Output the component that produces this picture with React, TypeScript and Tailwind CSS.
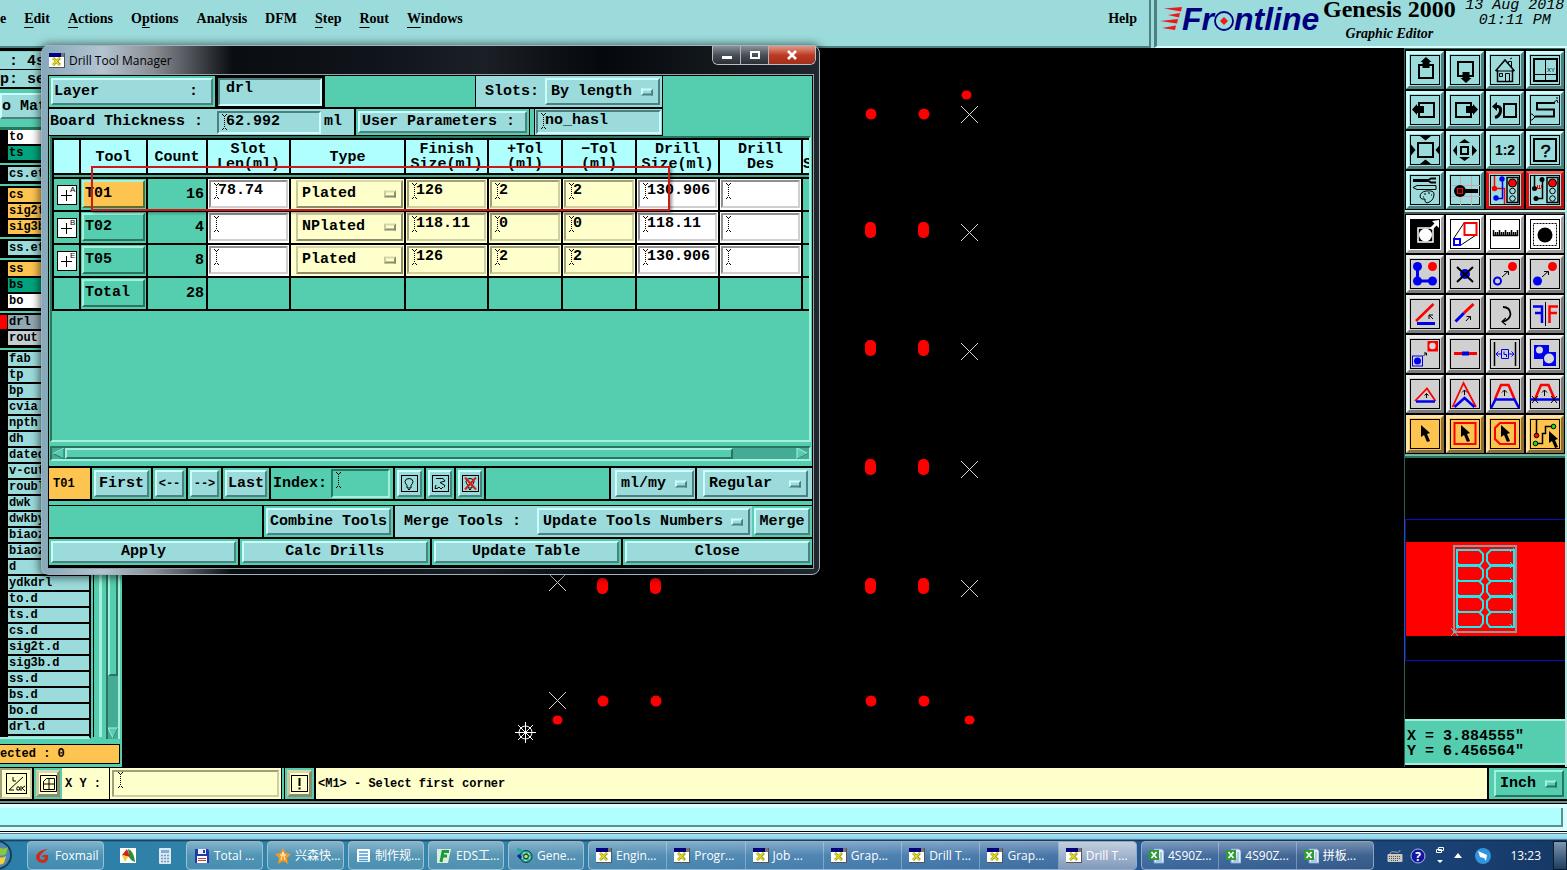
import React from "react";
import clsx from "clsx";

const AQUA = "bg-[#9cdbdb] border-t-[#cdfcfc] border-l-[#cdfcfc] border-b-[#4d8181] border-r-[#4d8181]";
const AQUA_IN = "bg-[#9cdbdb] border-t-[#4d8181] border-l-[#4d8181] border-b-[#cdfcfc] border-r-[#cdfcfc]";
const GREEN = "bg-[#54ceae] border-t-[#a4f0dc] border-l-[#a4f0dc] border-b-[#2a7560] border-r-[#2a7560]";
const GREEN_IN = "bg-[#54ceae] border-t-[#2a7560] border-l-[#2a7560] border-b-[#a4f0dc] border-r-[#a4f0dc]";
const WHITE_IN = "bg-white border-t-[#909090] border-l-[#909090] border-b-[#cfcfcf] border-r-[#cfcfcf]";
const CREAM = "bg-[#ffffcc] border-t-[#d8d8ac] border-l-[#c9c9a0] border-b-[#8c8c6c] border-r-[#8c8c6c]";
const CREAM_IN = "bg-[#ffffcc] border-t-[#a0a07c] border-l-[#a0a07c] border-b-[#cfcfa4] border-r-[#cfcfa4]";
const ORANGE = "bg-[#fdc450] border-t-[#a4f0dc] border-l-[#a4f0dc] border-b-[#5d6b30] border-r-[#5d6b30]";

function Btn({ tone = AQUA, className, children, label }: { tone?: string; className?: string; children?: React.ReactNode; label?: string }) {
  return (
    <button type="button" aria-label={label} className={clsx("flex items-center justify-center overflow-hidden whitespace-pre border-2", tone, className)}>
      {children}
    </button>
  );
}

function Caret() {
  return (
    <svg width="5" height="16" viewBox="0 0 5 16" className="shrink-0" aria-hidden="true">
      <path d="M0 .5h1M4 .5h1M1 1.5h3M0 15.5h1M4 15.5h1M1 14.5h3" stroke="#000" strokeDasharray="1 1" />
      <path d="M2.500 2v12" stroke="#000" strokeDasharray="1 1" />
    </svg>
  );
}

function Field({ label, value = "", tone = WHITE_IN, className, caret = true }: { label: string; value?: string; tone?: string; className?: string; caret?: boolean }) {
  return (
    <label className={clsx("flex items-start overflow-hidden border-2 pl-[3px] pt-px", tone, className)}>
      {caret ? <Caret /> : <span className="w-1 shrink-0" />}
      <input aria-label={label} defaultValue={value} className="-ml-px h-4 w-full min-w-0 bg-transparent leading-4 outline-none" />
    </label>
  );
}

function Drop({ label, options, tone = AQUA, pill = AQUA, className }: { label: string; options: string[]; tone?: string; pill?: string; className?: string }) {
  return (
    <div className={clsx("relative border-2", tone, className)}>
      <select aria-label={label} className="h-full w-full appearance-none bg-transparent pl-1 pt-px outline-none">
        {options.map((o) => (
          <option key={o}>{o}</option>
        ))}
      </select>
      <span className={clsx("pointer-events-none absolute right-[5px] top-1/2 h-[7px] w-3 -translate-y-1/2 border-2", pill)} />
    </div>
  );
}

/* ---------- tool palette ---------- */

const Cursor = ({ x = 15, y = 10 }: { x?: number; y?: number }) => (
  <path transform={`translate(${x} ${y})`} d="M0 0L0 12L3 10L6 17L9 16L6 9L9 8Z" fill="#000" stroke="none" />
);

const Arrow = ({ d, head }: { d: string; head: string }) => (
  <g stroke="#000" fill="none" strokeWidth="1">
    <path d={d} />
    <path d={head} />
  </g>
);

const K = { fill: "none", stroke: "#000", strokeWidth: 2 };
const R = "#ff0000";
const B = "#0000f0";

const viewIcons: { name: string; hot?: boolean; art: React.ReactNode }[] = [
  { name: "Pan up", art: <g><rect x="13" y="14" width="14" height="13" {...K} /><path d="M20 6L25.500 11H23.500V17H16.500V11H14.500Z" /></g> },
  { name: "Pan down", art: <g><rect x="12" y="11" width="15" height="14" {...K} /><path d="M20 32L25.500 27H23.500V21H16.500V27H14.500Z" /></g> },
  { name: "Home view", art: <g fill="none" stroke="#000"><path d="M9.500 20L19 9L28.500 20" strokeWidth="1.500" /><path d="M11.500 19V30.500H26.500V19" strokeWidth="1.500" /><path d="M10 20H28M13.500 22.500h3v3h-3zM19.500 30V22.500H23.500V30M22.500 13V10.500H25.500V16M24 8l2-1" /></g> },
  { name: "XY view", art: <g><rect x="8" y="8" width="23" height="22" {...K} /><path d="M19.500 8V30M8 23.500H31" stroke="#000" /><text x="21" y="21" fontSize="6" fontWeight="400" fontFamily="Liberation Sans">XY</text></g> },
  { name: "Pan left", art: <g><rect x="13" y="12" width="15" height="14" {...K} /><path d="M6 18.500L11 13V15H18V22H11V24Z" /></g> },
  { name: "Pan right", art: <g><rect x="10" y="12" width="15" height="14" {...K} /><path d="M32 18.500L27 13V15H20V22H27V24Z" /></g> },
  { name: "Previous view", art: <g><rect x="18" y="13" width="12" height="13" {...K} /><path d="M9 15.500H12Q15 16 14.500 20Q14 25 9 26.500" {...K} strokeWidth={3} /><path d="M6 15.500L11 11V20Z" /></g> },
  { name: "Serpentine", art: <g><path d="M29 12H11V18.500H28V25.500H9" {...K} /><path d="M27 12L31 9M31 8V6M31 9L32 12M9 26L6 23M9 26L6 29M5 22V24M5 28V30" stroke="#000" fill="none" /></g> },
  { name: "Zoom in", art: <g><rect x="12" y="12" width="15" height="14" {...K} /><path d="M14 5H25L19.500 9.500ZM14 33H25L19.500 28.500ZM5 13.500V24.500L9.500 19ZM34 13.500V24.500L29.500 19Z" /></g> },
  { name: "Zoom out", art: <g><rect x="15" y="16" width="7" height="7" {...K} /><path d="M13 12H24L18.500 8ZM13 26H24L18.500 30ZM11 14V25L7 19.500ZM26 14V25L31 19.500Z" /></g> },
  { name: "Scale 1:2", art: <text x="19" y="24" fontSize="14" fontWeight="700" textAnchor="middle" fontFamily="Liberation Sans">1:2</text> },
  { name: "Query", art: <g><rect x="8" y="8" width="22" height="22" {...K} /><text x="20" y="26" fontSize="18" textAnchor="middle" fontWeight="400" stroke="#000" strokeWidth=".5" fontFamily="Liberation Mono">?</text></g> },
  { name: "Colors and tools", art: <g fill="none" stroke="#000"><path d="M7 9.500H22" strokeWidth="3" /><path d="M30 7.500H25L22 9.500L25 11.500H30" strokeWidth="2" /><path d="M7 16.500L11 14.500H30V18.500H11Z" /><path d="M14 26Q14 21 20 20Q28 19 28 23Q28 30 21 32Q18 31 19 28Q15 29 14 26Z" /><path d="M18 23h2M22 22h2M25 24h1M17 26h1" /></g> },
  { name: "Zoom lens", art: <g><path d="M14.500 5V34M25.500 5V34M5 14.500H34M5 25.500H34" stroke="#c9a6b4" /><circle cx="14" cy="20" r="6" /><path d="M19 20H32" stroke="#000" strokeWidth="4" /><rect x="11.500" y="17.500" width="5" height="5" fill="none" stroke={R} /><path d="M13.500 19.500h1v1h-1z" fill={R} /></g> },
  { name: "Net check on", hot: true, art: <g><g fill="none"><path d="M8.500 5V17.500H18.500V33" stroke={R} strokeWidth="1.500" /><path d="M16.500 8V27.500H10" stroke={B} strokeWidth="1.500" /><rect x="21" y="6.500" width="11" height="25" stroke="#000" strokeWidth="1.500" /></g><circle cx="16" cy="8" r="2.700" fill={B} /><circle cx="10" cy="27" r="2.700" fill={B} /><circle cx="8.500" cy="17.500" r="2.700" fill={R} /><circle cx="26.500" cy="12" r="4" fill={R} stroke="#000" /><circle cx="26.500" cy="20" r="2.800" fill="none" stroke="#000" /><circle cx="26.500" cy="27.500" r="2.800" fill="none" stroke="#000" /></g> },
  { name: "Net check off", hot: true, art: <g><g fill="none"><path d="M8.500 5V17.500M16.500 8V27.500H10" stroke="#000" strokeWidth="1.500" /><path d="M10 17.500H15M11.500 14V17M13.500 14V17M15.500 14V17" stroke={R} /><rect x="21" y="6.500" width="11" height="25" stroke="#000" strokeWidth="1.500" /></g><circle cx="16" cy="8.500" r="2.500" /><circle cx="10" cy="27.500" r="2.500" /><circle cx="8.500" cy="17.500" r="2.500" /><circle cx="26.500" cy="12" r="4" fill={R} stroke="#000" /><circle cx="26.500" cy="20" r="2.800" fill="none" stroke="#000" /><circle cx="26.500" cy="27.500" r="2.800" fill="none" stroke="#000" /></g> },
];

const editIcons: { name: string; art: React.ReactNode }[] = [
  { name: "Add feature", art: <g><rect x="5" y="5" width="28" height="28" /><rect x="12" y="13" width="15" height="14" fill="none" stroke="#fff" strokeWidth="1.500" /><circle cx="19.500" cy="20" r="6.500" fill="#fff" /><path d="M25 14L30 9" stroke="#fff" strokeWidth="3" /><path d="M33 5V13L26 6Z" fill="#fff" /></g> },
  { name: "Resize feature", art: <g fill="none"><path d="M8 23L18 8M15 30L30 20" stroke="#000" /><rect x="18.500" y="8" width="12" height="12" stroke={R} strokeWidth="2" /><rect x="8" y="24" width="6" height="6" stroke={B} strokeWidth="2" /></g> },
  { name: "Measure", art: <path d="M7 20.500H32M7.500 15v6M9.500 17v4M11.500 17v4M13.500 15v6M15.500 17v4M17.500 17v4M19.500 15v6M21.500 17v4M23.500 17v4M25.500 15v6M27.500 17v4M29.500 17v4M31.500 15v6" stroke="#000" strokeWidth="1.500" /> },
  { name: "Select feature", art: <g><rect x="7.500" y="8.500" width="23" height="22" fill="none" stroke="#000" strokeDasharray="2 1" /><circle cx="19" cy="20" r="7.500" /></g> },
  { name: "Copy node", art: <g><path d="M11.500 11V26H26" fill="none" stroke={B} strokeWidth="3" /><circle cx="11.500" cy="11.500" r="4.500" fill={B} /><circle cx="11.500" cy="26" r="4.500" fill={B} /><circle cx="26.500" cy="26" r="4.500" fill={B} /><circle cx="26.500" cy="11.500" r="4.500" fill={R} /></g> },
  { name: "Delete", art: <g><circle cx="19" cy="19" r="5" fill={B} /><path d="M11 12L27 27M27 12L11 27" stroke="#000" strokeWidth="2" /></g> },
  { name: "Move ring", art: <g><circle cx="26.500" cy="11.500" r="4.500" fill={R} /><circle cx="11.500" cy="26" r="3.500" fill="none" stroke={B} strokeWidth="2" /><Arrow d="M16 22L22 16.500" head="M18 16.500H22.500V20" /></g> },
  { name: "Move pad", art: <g><circle cx="26.500" cy="11.500" r="4.500" fill={R} /><circle cx="11.500" cy="26" r="4.500" fill={B} /><Arrow d="M16 22L22 16.500" head="M18 16.500H22.500V20" /></g> },
  { name: "Rotate line", art: <g><path d="M10 26L27.500 9" stroke={R} strokeWidth="2.500" /><path d="M11 28.500H29" stroke={B} strokeWidth="3" /><Arrow d="M27 24L23 20" head="M23 24V20H27" /></g> },
  { name: "Extend line", art: <g><path d="M18 18L27.500 9" stroke={R} strokeWidth="3" /><path d="M9.500 26.500L18 18" stroke={B} strokeWidth="3" /><Arrow d="M20 26L24 21.500" head="M20.500 21.500H24.500V25" /></g> },
  { name: "Rotate", art: <g fill="none" stroke="#000" strokeWidth="1.800"><path d="M17 12Q24 12 24.500 19Q24 25 17 26.500" /><path d="M20 23L16 26.500L20 30" strokeWidth="1.200" /></g> },
  { name: "Mirror", art: <g fill="none"><path d="M16 28V11.500H7M16 18H9" stroke={B} strokeWidth="2.500" /><path d="M19.500 7V31" stroke="#000" /><path d="M23.500 28V11.500H32M23.500 18H31" stroke={R} strokeWidth="2.500" /></g> },
  { name: "Replace symbol", art: <g><rect x="6.500" y="21" width="10" height="10" fill="none" stroke={B} /><circle cx="11.500" cy="26" r="3.500" fill={B} /><rect x="21.500" y="6" width="10.500" height="10.500" fill={R} /><circle cx="26.500" cy="11" r="3.200" fill="#d8d8d8" /><Arrow d="M17.500 21L20.500 18" head="M18 18H20.500V20.500" /></g> },
  { name: "Break line", art: <g><path d="M8 18.500H31" stroke={R} strokeWidth="3" /><path d="M16 18.500H23" stroke={B} strokeWidth="4" /></g> },
  { name: "Spacing", art: <g fill="none"><path d="M8.500 7V31M29.500 7V31" stroke="#000" strokeWidth="1.500" /><path d="M10 19H16M22 19H28M12.500 16.500L10 19L12.500 21.500M25.500 16.500L28 19L25.500 21.500M15.500 14.500H22.500V23.500H15.500ZM18 16.500V19.500H20.500V22" stroke={B} /></g> },
  { name: "Merge shapes", art: <g><path d="M8 10H23V17H30V31H17V24H8Z" fill={B} /><circle cx="13.500" cy="15" r="3.500" fill="#d8d8d8" /><circle cx="23" cy="23.500" r="5" fill="#d8d8d8" /></g> },
  { name: "Small wedge", art: <g fill="none"><path d="M9 26L21 13.500L29.500 26" stroke={R} strokeWidth="1.800" /><path d="M10 26.500H29" stroke={B} strokeWidth="2.500" /><Arrow d="M20.500 23V19" head="M18.500 20.500L20.500 18.500L22.500 20.500" /></g> },
  { name: "Tall wedge", art: <g fill="none"><path d="M6.500 32L17.500 8L30 32" stroke={R} strokeWidth="1.800" /><path d="M8.500 32L18.500 23L28.500 32" stroke={B} strokeWidth="2.500" /><Arrow d="M18.500 20V15" head="M16 17.500L18.500 15L21 17.500" /></g> },
  { name: "Trapezoid", art: <g fill="none"><path d="M9 24L15 10H22.500L28.500 24" stroke={R} strokeWidth="2.500" /><path d="M5 33L9.500 24.500H28.500L33 33" stroke={B} strokeWidth="2.500" /><Arrow d="M18.500 21V15" head="M16 17.500L18.500 15L21 17.500" /></g> },
  { name: "Trapezoid cut", art: <g fill="none"><path d="M9 24L15 10H22.500L28.500 24" stroke={R} strokeWidth="2.500" /><path d="M4 24.500H33" stroke={B} strokeWidth="2.500" /><path d="M6 21L12 28M12 21L6 28M25 21L31 28M31 21L25 28" stroke="#000" /><Arrow d="M18.500 21V15" head="M16 17.500L18.500 15L21 17.500" /></g> },
  { name: "Select", art: <Cursor /> },
  { name: "Select by frame", art: <g><rect x="8.500" y="8" width="21" height="21" fill="none" stroke={R} strokeWidth="2" /><Cursor x={15} y={10} /></g> },
  { name: "Select by polygon", art: <g><path d="M14 8H29V29H14L9 24V13Z" fill="none" stroke={R} strokeWidth="2" /><Cursor x={15} y={10} /></g> },
  { name: "Select net", art: <g><path d="M10.500 5V20M10 28.500H16.500V18.500H19.500V11.500H27" fill="none" stroke="#000" strokeWidth="1.500" /><circle cx="10.500" cy="20.500" r="2.300" fill={R} stroke="#000" /><circle cx="9.500" cy="28.500" r="2.300" fill="#10e010" stroke="#000" /><circle cx="27.500" cy="11.500" r="2.300" fill="#10e010" stroke="#000" /><Cursor x={23} y={16} /></g> },
];

function ToolButton({ name, art, tone, hot }: { name: string; art: React.ReactNode; tone: string; hot?: boolean }) {
  return (
    <button type="button" aria-label={name} className={clsx("size-[38px] border-[3px]", tone)}>
      <svg width="32" height="32" viewBox="3 3 32 32" aria-hidden="true">
        {hot && <rect x="3.500" y="3.500" width="31" height="31" fill="none" stroke="#9cdbdb" />}
        <rect x="4.500" y="4.500" width="29" height="29" fill="none" stroke="#000" />
        {art}
      </svg>
    </button>
  );
}

const GRAY = "bg-[#d0d0d0] border-t-[#efefef] border-l-[#efefef] border-b-[#7d7d7d] border-r-[#7d7d7d]";
const WHITE = "bg-white border-t-[#ffffff] border-l-[#ffffff] border-b-[#a0a0a0] border-r-[#a0a0a0]";
const GOLD = "bg-[#fdc450] border-t-[#ffe3a6] border-l-[#ffe3a6] border-b-[#8a7038] border-r-[#8a7038]";
const HOT = "bg-[#9cdbdb] border-t-[#f0645c] border-l-[#e01010] border-b-[#a01818] border-r-[#c01010]";

/* ---------- layer list ---------- */

type Layer = { n: string; c?: string; gap?: boolean; mark?: boolean };
const layers: Layer[] = [
  { n: "to", c: "bg-white" },
  { n: "ts", c: "bg-[#00a37c]" },
  { n: "cs.et", gap: true },
  { n: "cs", c: "bg-[#fdc450]", gap: true },
  { n: "sig2t", c: "bg-[#fdc450]" },
  { n: "sig3b", c: "bg-[#fdc450]" },
  { n: "ss.et", gap: true },
  { n: "ss", c: "bg-[#fdc450]", gap: true },
  { n: "bs", c: "bg-[#00a37c]" },
  { n: "bo", c: "bg-white" },
  { n: "drl", c: "bg-[#8fa9b2]", gap: true, mark: true },
  { n: "rout", c: "bg-[#c5cfd3]" },
  { n: "fab", gap: true },
  ...["tp", "bp", "cvia", "npth", "dh", "dated", "v-cut", "roubl", "dwk", "dwkby", "biaoz", "biaoz", "d", "ydkdrl", "to.d", "ts.d", "cs.d", "sig2t.d", "sig3b.d", "ss.d", "bs.d", "bo.d", "drl.d", ""].map((n) => ({ n })),
];

function LayerPanel() {
  return (
    <aside className="flex w-[122px] shrink-0 flex-col bg-[#54ceae] text-xs leading-[15px]">
      <div className="flex h-[41px] flex-col gap-px border-b border-black bg-black pt-[3px] text-[15px]">
        <div className="flex h-[18px] items-center whitespace-pre border-t border-[#7fd0c0] bg-[#9cdbdb] pl-[9px] pt-px">: 4s</div>
        <div className="flex h-[17px] items-center whitespace-pre bg-[#9cdbdb] pt-px">p: se</div>
      </div>
      <Btn className="mt-1 h-[26px] !justify-start text-[15px]">o Mat</Btn>
      <div className="mt-2 h-[3px] shrink-0 bg-[#2a7560]" />
      <div className="flex min-h-0 flex-1 overflow-hidden">
        <ul className="w-[91px] shrink-0 overflow-hidden border-r-2 border-b-2 border-r-black border-b-[#a4f0dc] bg-black">
          {layers.map((l, i) => (
            <li key={i}>
              {l.gap && <div className="h-[5px] border-b-2 border-t border-black bg-[#54ceae]" />}
              <button type="button" className="flex h-4 w-full text-left">
                <span className={clsx("h-[14px] w-2 shrink-0", l.mark && "border-r border-black bg-[#ff0000]")} />
                <span className={clsx("h-[14px] flex-1 pl-px", l.c ?? "bg-[#9cdbdb]")}>{l.n}</span>
              </button>
            </li>
          ))}
        </ul>
        <div className="mb-[2px] ml-[2px] w-[9px] border-l border-r-[3px] border-l-black border-r-[#a4f0dc]" />
        <div className="ml-1 flex w-[14px] flex-col border-x-2 border-l-[#2a7560] border-r-[#a4f0dc] bg-[#45ab94]">
          <div className={clsx("h-[546px] border-2", GREEN)} />
          <span className="flex-1" />
          <svg width="10" height="12" viewBox="0 0 10 12" aria-hidden="true"><path d="M0 1H10L5 11Z" fill="#54ceae" stroke="#a4f0dc" /><path d="M10 1L5 11" stroke="#2a7560" /></svg>
        </div>
      </div>
      <div className="mb-[3px] mr-[2px] mt-[5px] flex h-[20px] items-center whitespace-pre border border-l-0 border-black bg-[#fdc450]">ected : 0</div>
    </aside>
  );
}

/* ---------- board canvas ---------- */

const crosses = [[969, 114], [969, 232], [969, 351], [969, 469], [969, 588], [557, 582], [557, 700]];
const slots = [[871, 230], [924, 230], [871, 348], [924, 348], [871, 467], [924, 467], [871, 586], [924, 586], [603, 586], [656, 586]];
const holes = [[871, 114], [924, 114], [871, 701], [924, 701], [603, 701], [656, 701]];
const pins = [[966, 95], [557, 720], [969, 720]];

function Board() {
  return (
    <svg width="100%" height="100%" className="block" role="img" aria-label="Drill layer">
      <g transform="translate(-122 -48)">
        {crosses.map(([x, y], i) => (
          <path key={i} d={`M${x - 8} ${y - 8}L${x + 9} ${y + 9}M${x - 8} ${y + 9}L${x + 9} ${y - 8}`} stroke="#d8d8d8" />
        ))}
        {slots.map(([x, y], i) => <rect key={i} x={x - 6} y={y - 8} width="11" height="16" rx="5" fill="#ff0000" />)}
        {holes.map(([x, y], i) => <circle key={i} cx={x} cy={y} r="5.500" fill="#ff0000" />)}
        {pins.map(([x, y], i) => <ellipse key={i} cx={x + 0.5} cy={y} rx="5" ry="4.500" fill="#ff0000" />)}
        <g stroke="#fff" fill="none">
          <circle cx="525.500" cy="732.500" r="6.500" />
          <path d="M515 732.500H536M525.500 722V743M518 725L533 740M533 725L518 740" />
        </g>
      </g>
    </svg>
  );
}

function Preview() {
  const ys = [550, 566, 581, 597, 612];
  return (
    <svg width="100%" height="100%" className="block" role="img" aria-label="Board overview">
      <rect y="84" width="100%" height="94" fill="#ff0000" />
      <path d="M0 61.500H170M0 202.500H170M.5 61V203" stroke="#0a0ad0" fill="none" />
      <g transform="translate(-1405 -458)" fill="none">
        <rect x="1454" y="546" width="62" height="86" stroke="#8f9a9a" strokeWidth="2" />
        {ys.map((y) => (
          <g key={y} stroke="#20e8f0" strokeWidth="2">
            <path d={`M1457 ${y}H1479L1483 ${y + 4}V${y + 11}L1480 ${y + 15}H1457Z`} />
            <path d={`M1514 ${y}H1491L1487 ${y + 4}V${y + 11}L1490 ${y + 15}H1514Z`} />
            <path d={`M1457 ${y + 12}l4 4M1510 ${y + 12}l4 4M1514 ${y - 2}l-4 4`} strokeWidth="1" />
          </g>
        ))}
        <path d="M1451 628L1458 636M1458 628L1451 636" stroke="#60d0d0" />
      </g>
    </svg>
  );
}

/* ---------- drill tool dialog ---------- */

const columns = [
  { t: "Tool", w: "w-[65px]" },
  { t: "Count", w: "w-[58px]" },
  { t: "Slot\nLen(ml)", w: "w-[81px]" },
  { t: "Type", w: "w-[113px]" },
  { t: "Finish\nSize(ml)", w: "w-[81px]" },
  { t: "+Tol\n(ml)", w: "w-[72px]" },
  { t: "−Tol\n(ml)", w: "w-[72px]" },
  { t: "Drill\nSize(ml)", w: "w-[81px]" },
  { t: "Drill\nDes", w: "w-[81px]" },
];

const drills = [
  { s: "A", id: "T01", n: 16, len: "78.74", type: "Plated", fin: "126", p: "2", m: "2", size: "130.906", on: true },
  { s: "B", id: "T02", n: 4, len: "", type: "NPlated", fin: "118.11", p: "0", m: "0", size: "118.11" },
  { s: "E", id: "T05", n: 8, len: "", type: "Plated", fin: "126", p: "2", m: "2", size: "130.906" },
];

function Symbol({ s }: { s: string }) {
  return (
    <svg width="20" height="20" viewBox="0 0 20 20" className="mx-auto block" aria-hidden="true">
      <rect x=".5" y=".5" width="19" height="19" fill="#fff" stroke="#000" />
      <path d="M4 10.500H15M9.500 5V16" stroke="#000" />
      <text x="13" y="7" fontSize="8" fontWeight="400" fontFamily="Liberation Sans">{s}</text>
    </svg>
  );
}

function DrillTable() {
  const cell = "p-px pb-[2px] align-top";
  return (
    <div className={clsx("mx-px h-[306px] overflow-hidden border-2", GREEN_IN)}>
      <table className="w-[840px] table-fixed border-separate border-spacing-[2px] bg-black">
        <thead>
          <tr className="h-[33px] bg-[#b0ffff] text-center">
            <td className="w-[25px] p-0" />
            {columns.map((c) => (
              <th key={c.t} className={clsx("whitespace-pre p-0 pt-px text-[15px] leading-[15px]", c.w)}>{c.t}</th>
            ))}
            <th className="overflow-hidden p-0 pt-4 text-left leading-[15px]">S</th>
          </tr>
        </thead>
        <tbody>
          <tr aria-hidden="true"><td colSpan={11} className="h-[2px] bg-[#45ab94] p-0" /></tr>
          {drills.map((d) => (
            <tr key={d.id} className="h-[31px] bg-[#54ceae]">
              <td className="p-0"><Symbol s={d.s} /></td>
              <td className={cell}><Btn tone={d.on ? ORANGE : GREEN} className="h-7 w-full !justify-start pl-px pt-px">{d.id}</Btn></td>
              <td className="p-0 pr-[2px] pt-[2px] text-right">{d.n}</td>
              <td className={clsx(cell, "bg-white")}><Field label="Slot length" value={d.len} className="h-7" /></td>
              <td className={clsx(cell, "bg-[#ffffcc]")}><Drop label="Type" options={[d.type, d.type === "Plated" ? "NPlated" : "Plated"]} tone={CREAM} pill={CREAM} className="ml-1 h-7" /></td>
              <td className={clsx(cell, "bg-[#ffffcc]")}><Field label="Finish size" value={d.fin} tone={CREAM_IN} className="h-7" /></td>
              <td className={clsx(cell, "bg-[#ffffcc]")}><Field label="Plus tolerance" value={d.p} tone={CREAM_IN} className="h-7" /></td>
              <td className={clsx(cell, "bg-[#ffffcc]")}><Field label="Minus tolerance" value={d.m} tone={CREAM_IN} className="h-7" /></td>
              <td className={clsx(cell, "bg-white")}><Field label="Drill size" value={d.size} className="h-7" /></td>
              <td className={clsx(cell, "bg-white")}><Field label="Drill designation" className="h-7" /></td>
              <td className="p-0" />
            </tr>
          ))}
          <tr className="h-[31px] bg-[#54ceae]">
            <td className="p-0" />
            <td className={cell}><Btn tone={GREEN} className="h-7 w-full !justify-start pl-px pt-px">Total</Btn></td>
            <td className="p-0 pr-[2px] pt-[2px] text-right">28</td>
            {[0, 1, 2, 3, 4, 5, 6, 7].map((i) => <td key={i} className="p-0" />)}
          </tr>
        </tbody>
      </table>
    </div>
  );
}

function XIcon() {
  return (
    <svg width="16" height="15" viewBox="0 0 16 15" className="shrink-0" aria-hidden="true">
      <rect width="16" height="15" fill="#555" />
      <rect x="0" y="0" width="15" height="14" fill="#fff" />
      <rect x="0" y="0" width="12" height="4" fill="#00007c" />
      <rect x="12" y="0" width="3" height="4" fill="#777" />
      <path d="M4 5L11 12M11 5L4 12" stroke="#8f9010" strokeWidth="2.500" />
      <path d="M4 5L10.500 12M10.500 5L4 12" stroke="#e8e020" strokeWidth="1.200" />
    </svg>
  );
}

const bulb = <path d="M6 10.500Q4 8 4 6.500Q4.500 3.500 8 3.500Q11.500 3.500 12 6.500Q12 8 10 10.500V13H6ZM7 14.500H9" fill="none" stroke="#000" />;

function IconCell({ label, className, children }: { label: string; className: string; children: React.ReactNode }) {
  return (
    <div className={clsx("bg-[#54ceae] p-[2px]", className)}>
      <Btn label={label} className="h-full w-full">
        <svg width="17" height="17" viewBox="0 0 17 17" className="shrink-0" aria-hidden="true">
          <rect x=".5" y=".5" width="16" height="16" fill="none" stroke="#000" />
          {children}
        </svg>
      </Btn>
    </div>
  );
}

function Dialog() {
  const cell = "bg-[#54ceae] p-[2px]";
  const fill = "h-full w-full pt-px";
  return (
    <section
      aria-label="Drill Tool Manager"
      className="absolute left-[41px] top-[45px] w-[779px] rounded-lg border border-[#9fb4bd] bg-[linear-gradient(90deg,#86a9bd_0,#b4c4d0_60px,#8b8f96_110px,#55585e_145px,#0a0d12_190px,#10151b_340px,#1b2026_440px,#05080c_560px,#20272d_100%)] px-[6px] pb-[6px] shadow-[0_1px_8px_2px_rgba(0,0,0,0.55)]"
    >
      <header className="flex h-[29px] items-start pl-px">
        <div className="flex h-[29px] flex-1 items-center gap-1 font-['Open_Sans',sans-serif] text-xs font-normal">
          <XIcon />
          <h1>Drill Tool Manager</h1>
        </div>
        <div className="mr-[-3px] flex h-[19px] overflow-hidden rounded-b-md border border-t-0 border-[#b8c0c6]">
          <button type="button" aria-label="Minimize" className="flex w-7 items-center justify-center border-r border-[#aeb6bc] bg-linear-to-b from-[#8b939b] via-[#4a5057] to-[#2b3036]"><svg width="12" height="12"><rect x="1" y="7" width="10" height="3" fill="#fff" /></svg></button>
          <button type="button" aria-label="Maximize" className="flex w-7 items-center justify-center border-r border-[#aeb6bc] bg-linear-to-b from-[#8b939b] via-[#4a5057] to-[#2b3036]"><svg width="12" height="12"><rect x="2" y="3" width="8" height="6" fill="none" stroke="#fff" strokeWidth="2" /></svg></button>
          <button type="button" aria-label="Close window" className="flex w-[46px] items-center justify-center bg-linear-to-b from-[#dd9a8c] via-[#bf3a22] to-[#a0301c]"><svg width="12" height="12"><path d="M2 2L10 10M10 2L2 10" stroke="#fff" strokeWidth="2.500" /></svg></button>
        </div>
      </header>

      <div className="border border-black bg-[#54ceae] outline outline-1 outline-[#8fa6ac]">
        <div className="flex w-[614px] flex-col gap-[2px] border-b border-r border-black bg-black">
          <div className="flex h-[31px]">
            <div className={clsx(cell, "w-[166px]")}><Btn className={clsx(fill, "!justify-start pl-px")}>Layer          :</Btn></div>
            <div className="w-[110px] px-[3px] pb-px"><Field label="Layer" value="drl" tone={AQUA_IN} caret={false} className="mt-[2px] h-7" /></div>
            <div className="flex-1 bg-[#54ceae]" />
            <div className="ml-px flex w-[186px] items-center bg-[#9cdbdb] pl-[9px]">
              <span className="w-[60px] pt-px">Slots:</span>
              <Drop label="Slots" options={["By length", "By count"]} className="h-[27px] w-[115px]" />
            </div>
          </div>
          <div className="flex h-[26px]">
            <div className="flex w-[305px] items-center bg-[#9cdbdb] pl-px">
              <span className="w-[167px] whitespace-pre">Board Thickness :</span>
              <Field label="Board thickness" value="62.992" tone={AQUA_IN} className="h-[23px] w-[104px]" />
              <span className="pl-[3px]">ml</span>
            </div>
            <div className={clsx(cell, "ml-[2px] w-[173px]")}><Btn className={clsx(fill, "!justify-start pl-[2px]")}>User Parameters :</Btn></div>
            <div className="ml-px w-1 bg-[#54ceae]" />
            <div className="ml-px flex flex-1 bg-[#9cdbdb] p-px"><Field label="User parameters" value="no_hasl" tone={AQUA_IN} className="w-full" /></div>
          </div>
        </div>

        <DrillTable />

        <div className={clsx("mx-px mb-[5px] mt-1 flex h-[15px] border-2 !bg-[#45ab94]", GREEN_IN)}>
          <svg width="13" height="11" aria-hidden="true"><path d="M12 0V11L1 5.500Z" fill="#54ceae" stroke="#2a7560" /><path d="M12 0L1 5.500" stroke="#a4f0dc" /></svg>
          <div className={clsx("w-[668px] border-2", GREEN)} />
          <span className="flex-1" />
          <svg width="13" height="11" aria-hidden="true"><path d="M1 0V11L12 5.500Z" fill="#54ceae" stroke="#a4f0dc" /><path d="M1 11L12 5.500" stroke="#2a7560" /></svg>
        </div>

        <div className="flex h-[35px] gap-[2px] border-y-2 border-black bg-black">
          <div className="flex w-[41px] items-center bg-[#fdc450] pl-1 text-xs">T01</div>
          <div className={clsx(cell, "w-[59px]")}><Btn className={fill}>First</Btn></div>
          <div className={clsx(cell, "w-[33px]")}><Btn className={clsx(fill, "text-xs")}>&lt;--</Btn></div>
          <div className={clsx(cell, "w-[33px]")}><Btn className={clsx(fill, "text-xs")}>--&gt;</Btn></div>
          <div className={clsx(cell, "w-[46px]")}><Btn className={fill}>Last</Btn></div>
          <div className="flex w-[122px] items-center bg-[#54ceae] pl-[2px]">
            <span className="w-[58px] pt-px">Index:</span>
            <Field label="Index" tone={GREEN_IN} className="h-[29px] w-[59px]" />
          </div>
          <IconCell label="Highlight" className="w-[29px]">{bulb}</IconCell>
          <IconCell label="Profile" className="w-[28px]"><path d="M4 3.500H11L13 6L8 7.500L13 10.500L12 12.500M4 10L3 13.500H5L7 12L9 14L11 12" fill="none" stroke="#000" /></IconCell>
          <IconCell label="Clear highlight" className="w-[28px]">{bulb}<path d="M3 2.500L14 14.500M14 2.500L3 14.500" stroke="#e01818" strokeWidth="2" /></IconCell>
          <div className="flex-1 bg-[#54ceae]" />
          <div className="flex w-[84px] items-center bg-[#9cdbdb] pl-1"><Drop label="Units" options={["ml/my", "mm"]} className="h-[27px] w-[79px]" /></div>
          <div className="flex w-[115px] items-center bg-[#9cdbdb] pl-[6px]"><Drop label="Mode" options={["Regular", "Advanced"]} className="h-[27px] w-[105px]" /></div>
        </div>

        <div className="mt-[4px] flex h-[34px] gap-[2px] border-b-2 border-t border-black bg-black">
          <div className="w-[213px] bg-[#54ceae]" />
          <div className={clsx(cell, "w-[129px]")}><Btn className={fill}>Combine Tools</Btn></div>
          <div className="flex flex-1 items-center bg-[#9cdbdb] pl-[9px]">
            <span className="flex-1 whitespace-pre pt-px">Merge Tools :</span>
            <Drop label="Merge mode" options={["Update Tools Numbers", "Keep Tools Numbers"]} className="h-[27px] w-[213px]" />
            <div className="ml-[2px] h-full w-[60px] bg-[#54ceae] p-[2px]"><Btn className={fill}>Merge</Btn></div>
          </div>
        </div>

        <div className="flex h-[28px] gap-[2px] border-b-2 border-black bg-black">
          {["Apply", "Calc Drills", "Update Table", "Close"].map((t) => (
            <div key={t} className={clsx(cell, "flex-1")}><Btn className={fill}>{t}</Btn></div>
          ))}
        </div>
      </div>
      <div className="pointer-events-none absolute left-[49px] top-[120px] h-[45px] w-[579px] border-2 border-[#cf1818] shadow-[2px_2px_3px_rgba(0,0,0,0.4)]" />
    </section>
  );
}

/* ---------- header, status, task bar ---------- */

const menus = [["", "e", ""], ["", "E", "dit"], ["", "A", "ctions"], ["O", "p", "tions"], ["Analysis", "", ""], ["DFM", "", ""], ["", "S", "tep"], ["", "R", "out"], ["", "W", "indows"]];

function TopBar() {
  return (
    <header className="flex h-12 shrink-0 overflow-hidden bg-[#9cdbdb] font-['Liberation_Serif',serif] text-sm">
      <nav className="flex flex-1 items-start gap-[18px] border-b-2 border-r-2 border-[#4d8181] pt-[9px]">
        {menus.map(([a, u, b], i) => (
          <button type="button" key={i}>{a}{u && i > 0 ? <span className="underline underline-offset-4">{u}</span> : u}{b}</button>
        ))}
        <button type="button" className="ml-auto mr-3">Help</button>
      </nav>
      <div className="ml-[3px] flex w-[413px] border-b-2 border-l-[3px] border-b-[#d8ffff] border-l-[#4d8181] pl-[3px]">
        <div className="flex h-[38px] items-center font-['Liberation_Sans',sans-serif] text-[32px] italic leading-none text-[#00007e]">
          <svg width="22" height="24" viewBox="0 0 22 24" aria-hidden="true"><path d="M4 1.500L22 0L21 4.500ZM8 8L20 6L19 10.500ZM0 14L18 12L17 16.500ZM2 21L16 18.500L15 23Z" fill="#f01818" /></svg>
          Fr
          <svg width="20" height="22" viewBox="0 0 20 22" className="mt-1 shrink-0" aria-label="o"><circle cx="10" cy="11" r="9" fill="none" stroke="#00007e" strokeWidth="1.800" /><path d="M10 7L14 11L10 15L6 11Z" fill="#f01818" /></svg>
          ntline
        </div>
        <div className="flex w-[140px] shrink-0 flex-col items-center whitespace-nowrap">
          <span className="-mt-[4px] text-2xl leading-[26px]">Genesis 2000</span>
          <span className="mt-[3px] italic leading-[18px]">Graphic Editor</span>
        </div>
        <div className="-mt-[2px] flex-1 whitespace-pre pl-[3px] text-center font-['Liberation_Mono',monospace] text-[15px] font-normal italic leading-[15px]">
          13 Aug 2018<br />01:11 PM
        </div>
      </div>
    </header>
  );
}

function StatusBar() {
  return (
    <div className="flex h-[34px] shrink-0 border-b-2 border-t border-black bg-[#54ceae] text-xs">
      <Btn label="Snap" tone={CREAM_IN} className="w-8"><svg width="21" height="21" aria-hidden="true"><rect x=".5" y=".5" width="20" height="20" fill="none" stroke="#000" /><path d="M3 17L17 4M7 4v4h3M3 17h5M11 17q-1-4 2-3q2 3 0 3zM15 13v5M19 13l-3 2l3 3" fill="none" stroke="#000" /></svg></Btn>
      <div className="w-[30px] border-l-2 border-black p-[2px]"><Btn label="Grid" tone={CREAM} className="h-full w-full !border-[3px]"><svg width="17" height="17" className="shrink-0" aria-hidden="true"><path d="M.5 .5H16.500V16.500H.5ZM3.500 14.500V6.500L6.500 3.500H14.500V14.500ZM9 3V15M3 9H15" fill="none" stroke="#000" /></svg></Btn></div>
      <label htmlFor="xy" className="flex w-[47px] items-center whitespace-pre bg-[#ffffcc] pl-[3px]">X Y :</label>
      <div className="flex w-[173px] border-x border-black bg-[#ffffcc] p-[2px]">
        <div className={clsx("flex w-full items-start border-2 pl-1", CREAM_IN)}><Caret /><input id="xy" className="h-4 w-full bg-transparent outline-none" /></div>
      </div>
      <div className="ml-[2px] w-[31px] border-x border-black p-[2px]"><Btn label="Help message" tone={CREAM} className="h-full w-full !border-[3px]"><svg width="17" height="17" className="shrink-0" aria-hidden="true"><rect x=".5" y=".5" width="16" height="16" fill="none" stroke="#000" /><path d="M8.500 3V11M8.500 12.500V14.500" stroke="#000" strokeWidth="2" /></svg></Btn></div>
      <p className="flex flex-1 items-center whitespace-pre border-l border-black bg-[#ffffcc] pl-[2px]">&lt;M1&gt; - Select first corner</p>
      <div className="flex w-[80px] items-center border-l-2 border-black pl-[5px] text-[15px]"><Drop label="Units" options={["Inch", "mm"]} tone={GREEN} pill={GREEN} className="h-[27px] w-[70px]" /></div>
    </div>
  );
}

function ExcelIcon() {
  return (
    <svg width="15" height="16" viewBox="0 0 15 16" className="shrink-0" aria-hidden="true"><path d="M5 1h8l2 2v12H5z" fill="#e4eefb" stroke="#7a9fd0" /><path d="M7 11h6M7 13h6M12 4v6" stroke="#7a9fd0" /><rect y="2" width="10" height="10" fill="#2f9b35" /><path d="M2.500 4L7.500 10M7.500 4L2.500 10" stroke="#fff" strokeWidth="1.600" /></svg>
  );
}

const FoxIcon = () => <svg width="16" height="16" viewBox="0 0 16 16" className="shrink-0" aria-hidden="true"><path d="M13 1Q3 2 1 8Q1 15 8 15Q14 14 13 7H8L7 9H10Q10 12 7 12Q4 11 5 8Q7 4 13 1Z" fill="#d02a1c" /></svg>;
const DiskIcon = () => <svg width="16" height="16" viewBox="0 0 16 16" className="shrink-0" aria-hidden="true"><path d="M1 1H14L15 3V15H1Z" fill="#2338a8" /><rect x="4" y="1" width="8" height="5" fill="#e8eef8" /><rect x="9" y="2" width="2" height="3" fill="#2338a8" /><rect x="3" y="8" width="10" height="7" fill="#fff" /><path d="M4 10.500h8M4 12.500h8" stroke="#c04040" /></svg>;
const StarIcon = () => <svg width="16" height="16" viewBox="0 0 16 16" className="shrink-0" aria-hidden="true"><path d="M8 0L10.500 5L16 6L12 10L13 16L8 13L3 16L4 10L0 6L5.500 5Z" fill="#f59a23" /><path d="M8 4L6 12M8 4l2 8M5 7h6" stroke="#fff3d0" fill="none" /></svg>;
const DocIcon = () => <svg width="15" height="15" viewBox="0 0 15 15" className="shrink-0" aria-hidden="true"><rect x="1" y="1" width="13" height="13" rx="1" fill="#fff" /><path d="M3 4h9M3 7h9M3 10h9M3 12.500h9" stroke="#4a9ad0" strokeWidth="1.500" /></svg>;
const EdsIcon = () => <svg width="16" height="16" viewBox="0 0 16 16" className="shrink-0" aria-hidden="true"><path d="M1 1H15L12 15H1Z" fill="#d9efdc" /><path d="M5 14L7 3.500H13M6.500 8H11" stroke="#1d9a3c" strokeWidth="3" fill="none" /></svg>;
const GenIcon = () => <svg width="17" height="17" viewBox="0 0 17 17" className="shrink-0" aria-hidden="true"><circle cx="10" cy="9.500" r="6" fill="#30a8a0" stroke="#084048" /><circle cx="10" cy="9.500" r="4" fill="none" stroke="#d8f0a0" strokeDasharray="3 2" /><circle cx="10" cy="9.500" r="2.300" fill="#b8e860" stroke="#0a3030" /><path d="M1 2l3 1l2 2" stroke="#20b0a0" strokeWidth="3" fill="none" /><path d="M2 8l3 3" stroke="#1020a0" strokeWidth="3" /></svg>;

function Task({ icon, text, active }: { icon: React.ReactNode; text: string; active?: boolean }) {
  return (
    <button type="button" className={clsx("flex h-full min-w-0 flex-1 items-center gap-1 whitespace-nowrap border-r border-white/30 pl-[7px] last:border-r-0", active ? "bg-linear-to-b from-[#c3cfdf] to-[#8299bb]" : "bg-linear-to-b from-white/40 via-white/15 to-white/10")}>
      {icon}
      <span>{text}</span>
    </button>
  );
}

const group = "flex h-[29px] overflow-hidden rounded border border-white/50";

function TaskBar() {
  return (
    <footer className="flex h-[37px] shrink-0 items-end gap-1 border-t border-[#507888] bg-[linear-gradient(180deg,#a5e6f7_0,#8fd0ea_5px,#10304a_6px,transparent_8px),linear-gradient(90deg,#2a7fa8,#3a85a8_30%,#2f6da5_55%,#245590_75%,#153866)] font-['Open_Sans','Noto_Sans_CJK_SC',sans-serif] text-xs font-normal text-white">
      <div className="flex h-[30px] w-[23px] overflow-hidden" aria-hidden="true">
        <svg width="14" height="30" viewBox="0 0 14 30"><circle cx="-3" cy="15" r="14" fill="#4a88b0" stroke="#183c58" strokeWidth="2" /><path d="M-3 7Q4 10 8 7L6 14Q1 17 -3 14Z" fill="#8cc63f" /><path d="M-3 16Q1 19 6 16L4 23Q0 26 -4 23Z" fill="#f7d038" /></svg>
      </div>
      <div className={clsx(group, "w-[77px]")}><Task icon={<FoxIcon />} text="Foxmail" /></div>
      <div className="flex h-[29px] w-[74px] items-center justify-around">
        <svg width="16" height="16" viewBox="0 0 16 16" aria-hidden="true"><rect width="16" height="15" fill="#fff" /><path d="M8 1Q14 3 15 14Q11 13 9 9Z" fill="#2f8f2f" /><path d="M7 1L10 9L2 7Z" fill="#d42020" /><path d="M2 7L8 9L5 14Z" fill="#f0d020" /></svg>
        <svg width="12" height="16" viewBox="0 0 12 16" aria-hidden="true"><rect width="12" height="16" rx="1" fill="#dce9f5" /><rect x="2" y="2" width="8" height="3" fill="#7ab0dc" /><path d="M2 7.500h8M2 10.500h8M2 13.500h8" stroke="#7a98b8" strokeWidth="1.500" strokeDasharray="2 1" /></svg>
      </div>
      <div className={clsx(group, "w-[77px]")}><Task icon={<DiskIcon />} text="Total ..." /></div>
      <div className={clsx(group, "w-[77px]")}><Task icon={<StarIcon />} text="兴森快..." /></div>
      <div className={clsx(group, "w-[76px]")}><Task icon={<DocIcon />} text="制作规..." /></div>
      <div className={clsx(group, "w-[76px]")}><Task icon={<EdsIcon />} text="EDS工..." /></div>
      <div className={clsx(group, "w-[76px]")}><Task icon={<GenIcon />} text="Gene..." /></div>
      <div className={clsx(group, "w-[549px]")}>
        {["Engin...", "Progr...", "Job ...", "Grap...", "Drill T...", "Grap...", "Drill T..."].map((t, i) => <Task key={i} icon={<XIcon />} text={t} active={i === 6} />)}
      </div>
      <div className={clsx(group, "w-[233px]")}>
        {["4S90Z...", "4S90Z...", "拼板..."].map((t, i) => <Task key={i} icon={<ExcelIcon />} text={t} />)}
      </div>
      <div className="flex h-[29px] flex-1 items-center justify-end">
        <svg width="16" height="14" viewBox="0 0 16 14" aria-hidden="true"><rect x=".5" y="5" width="15" height="8" rx="1" fill="#c8c8c4" /><path d="M2 7.500h12M2 9.500h12M4 11.500h8" stroke="#555" strokeDasharray="1 1" /><path d="M3 5Q3 2 8 3T13 1" stroke="#aaa" fill="none" /></svg>
        <svg width="16" height="16" viewBox="0 0 16 16" className="ml-[7px]" aria-hidden="true"><circle cx="8" cy="8" r="7" fill="#1414a0" stroke="#a8b8e8" /><text x="8" y="12.500" fontSize="12" fontWeight="700" fill="#fff" textAnchor="middle">?</text></svg>
        <svg width="10" height="20" viewBox="0 0 10 20" className="ml-[9px]" aria-hidden="true"><path d="M3.500 1.500h5v3h-5zM1.500 3.500h5v3h-5z" fill="#1b4272" stroke="#fff" /><path d="M2 14h6L5 17z" fill="#fff" /></svg>
        <svg width="8" height="5" viewBox="0 0 8 5" className="ml-[9px]" aria-hidden="true"><path d="M4 0L8 5H0Z" fill="#fff" /></svg>
        <svg width="16" height="16" viewBox="0 0 16 16" className="ml-[13px]" aria-hidden="true"><circle cx="8" cy="8" r="8" fill="#2f95dc" /><path d="M3 3L12 7L11 13L9 10L5 9Z" fill="#fff" /></svg>
        <span className="ml-[19px]">13:23</span>
        <button type="button" aria-label="Show desktop" className="ml-3 h-[29px] w-[14px] border border-[#0c1c30] bg-linear-to-b from-[#7d95b0] to-[#1e3d60]" />
      </div>
    </footer>
  );
}

export default function App() {
  return (
    <div className="relative flex h-screen w-full flex-col overflow-hidden bg-black font-['Liberation_Mono','Noto_Sans_CJK_SC',monospace] text-[15px] font-bold text-black">
      <TopBar />
      <main className="flex min-h-0 flex-1">
        <LayerPanel />
        <div className="min-w-0 flex-1 overflow-hidden bg-black"><Board /></div>
        <aside className="flex w-[163px] shrink-0 flex-col border-l border-r-2 border-l-[#2a6052] border-r-[#b8e8e4] bg-black">
          <div className="grid grid-cols-[repeat(4,38px)] gap-[2px] border-t border-t-[#2a7560] pb-px pl-px pt-[2px]">
            {viewIcons.map((t) => <ToolButton key={t.name} name={t.name} art={t.art} hot={t.hot} tone={t.hot ? HOT : AQUA} />)}
          </div>
          <div className="h-1 shrink-0 border-b-2 border-t-2 border-b-[#555] border-t-[#c4f4f0]" />
          <div className="grid grid-cols-[repeat(4,38px)] gap-[2px] pb-px pl-px pt-px">
            {editIcons.map((t, i) => <ToolButton key={t.name} name={t.name} art={t.art} tone={i < 4 ? WHITE : i < 20 ? GRAY : GOLD} />)}
          </div>
          <div className="h-1 shrink-0 border-b-2 border-t border-b-[#2a7560] border-t-[#9a9a9a] bg-[#54ceae]" />
          <div className="min-h-0 flex-1"><Preview /></div>
          <div className="h-[46px] shrink-0 whitespace-pre border-y-2 border-t-[#a4f0dc] border-b-[#a4f0dc] bg-[#54ceae] pl-[2px] pt-2 leading-[15px]">{'X = 3.884555"\nY = 6.456564"'}</div>
          <div className="h-[2px] shrink-0" />
        </aside>
      </main>
      <StatusBar />
      <div className="h-[32px] shrink-0 border-t-2 border-[#6f908a] bg-black pt-px">
        <div className="h-[28px] border-b border-black bg-[#d8ffff] pr-1 pt-1">
          <div className="h-[19px] border-b-2 border-r-2 border-[#5c9090] bg-[#b0ffff]" />
        </div>
        <div className="h-px bg-white" />
      </div>
      <TaskBar />
      <Dialog />
    </div>
  );
}
